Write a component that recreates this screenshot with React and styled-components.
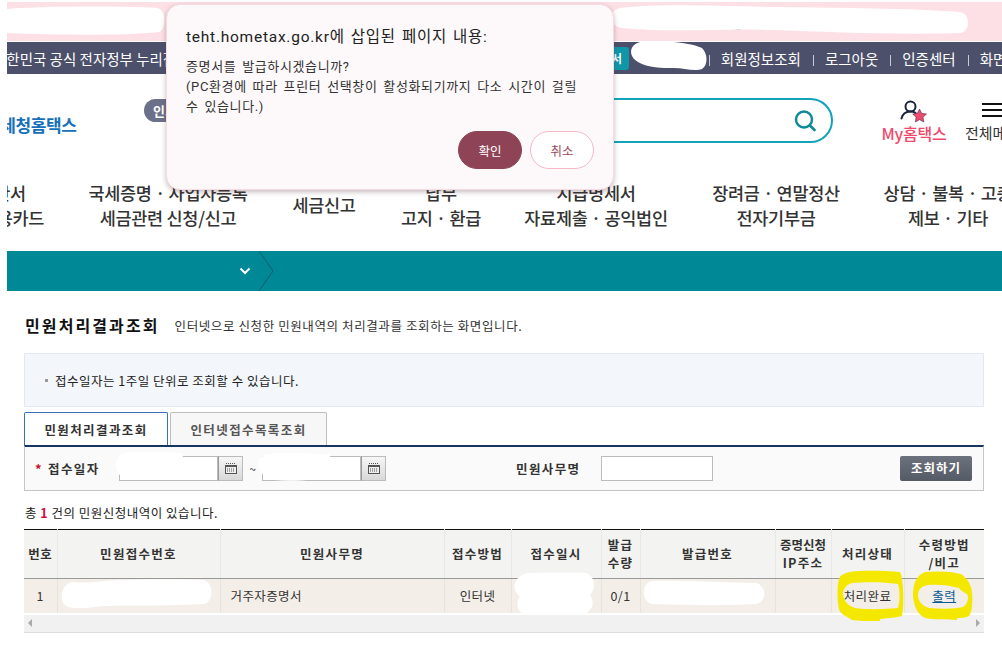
import React from "react";
import styled, { createGlobalStyle } from "styled-components";

const KR = `"Noto Sans CJK KR", "Liberation Sans", sans-serif`;

const GlobalStyle = createGlobalStyle`
  html, body { margin: 0; padding: 0; background: #fff; }
  body { font-family: ${KR}; color: #222; }
  * { box-sizing: border-box; }
`;

const Page = styled.div`
  position: relative;
  width: 1002px;
  height: 649px;
  overflow: hidden;
  background: #fff;
`;
const Site = styled.div`
  margin-left: 7px;
  padding-top: 2px;
  width: 995px;
  overflow: hidden;
`;
const PinkBar = styled.div`
  height: 39px;
  margin-bottom: 1px;
  background: #fde0e6;
`;
const GovBar = styled.div`
  height: 32px;
  background: #4c506b;
  color: #fff;
  display: flex;
  align-items: center;
  font-size: 14.5px;
  white-space: nowrap;
`;
const GovText = styled.span`
  margin-left: -14px;
  width: 175px;
  overflow: hidden;
`;
const GovLinks = styled.div`
  margin-left: auto;
  display: flex;
  align-items: center;
  margin-right: -31px;
`;
const CertBadge = styled.span`
  width: 30px;
  height: 23px;
  margin-right: 68px;
  background: #0f97a8;
  border-radius: 3px;
  font-size: 11px;
  font-weight: 700;
  text-align: right;
  line-height: 23px;
  padding-right: 7px;
`;
const GovLink = styled.span`
  &::before {
    content: "";
    display: inline-block;
    width: 1px;
    height: 11px;
    margin: 0 11px 0 12px;
    background: #c8cad6;
    vertical-align: -1px;
  }
`;

const Masthead = styled.div`
  height: 103px;
  display: flex;
  align-items: flex-start;
`;
const Logo = styled.div`
  width: 159px;
  margin: 38px 0 0 -22px;
  flex: none;
  color: #1670b7;
  font-size: 17px;
  font-weight: 700;
  letter-spacing: -0.4px;
  white-space: nowrap;
`;
const Pill = styled.div`
  width: 50px;
  height: 23px;
  margin-top: 25px;
  flex: none;
  padding-left: 9px;
  border-radius: 12px;
  background: #6c7088;
  color: #fff;
  font-size: 13px;
  font-weight: 700;
  line-height: 23px;
`;
const SearchBox = styled.div`
  width: 633px;
  height: 45px;
  margin: 24px 0 0 6px;
  flex: none;
  display: flex;
  align-items: center;
  justify-content: flex-end;
  padding-right: 15px;
  border: 2px solid #12a3b8;
  border-radius: 23px;
`;
const MyMenu = styled.div`
  width: 80px;
  margin: 26px 0 0 41px;
  flex: none;
  display: flex;
  flex-direction: column;
  align-items: center;
  color: #ee4a6c;
  font-size: 16px;
  font-weight: 500;
  white-space: nowrap;
  letter-spacing: -0.2px;
  line-height: 17px;
`;
const AllMenu = styled.div`
  margin: 29px 0 0 11px;
  width: 60px;
  flex: none;
  font-size: 15px;
  line-height: 20px;
  color: #333;
  white-space: nowrap;
`;
const Burger = styled.div`
  width: 20px;
  height: 14px;
  margin: 0 0 6px 17px;
  border-top: 2px solid #111;
  border-bottom: 2px solid #111;
  &::after {
    content: "";
    display: block;
    height: 2px;
    margin-top: 4px;
    background: #111;
  }
`;

const MainNav = styled.nav`
  height: 74px;
  display: grid;
  grid-template-columns: 203px 204px 108px 126px 184px 176px 168px;
  margin-left: -144px;
  width: 1169px;
  align-items: start;
  padding-top: 3px;
`;
const NavItem = styled.div`
  text-align: center;
  font-size: 17.5px;
  font-weight: 500;
  line-height: 25px;
  color: #333;
  white-space: nowrap;
  letter-spacing: -0.3px;
  padding-top: ${(p) => (p.$single ? "12px" : "0")};
`;

const TealBar = styled.div`
  height: 40px;
  background: #008896;
  display: flex;
  align-items: center;
  padding-left: 232px;
  gap: 8px;
`;

const Content = styled.main`
  padding: 21px 18px 0 17px;
`;
const TitleRow = styled.div`
  display: flex;
  align-items: center;
  height: 26px;
  margin-bottom: 15px;
  padding-left: 1px;
`;
const Title = styled.h1`
  margin: 0 15px 0 0;
  font-size: 16px;
  font-weight: 700;
  color: #111;
  letter-spacing: 2.1px;
`;
const TitleDesc = styled.p`
  margin: 0;
  font-size: 12.5px;
  color: #333;
  letter-spacing: 0.6px;
`;
const Notice = styled.div`
  height: 54px;
  padding-left: 20px;
  display: flex;
  align-items: center;
  gap: 7px;
  background: #f3f6fb;
  border: 1px solid #e3e8f0;
  font-size: 12.5px;
  color: #222;
  letter-spacing: 0.5px;
`;
const Bullet = styled.i`
  width: 3px;
  height: 3px;
  background: #999;
`;
const Tabs = styled.div`
  display: flex;
  gap: 2px;
  height: 33px;
  margin-top: 5px;
`;
const Tab = styled.div`
  width: ${(p) => (p.$active ? "144px" : "157px")};
  display: flex;
  align-items: center;
  justify-content: center;
  border: 1px solid ${(p) => (p.$active ? "#3a70b4" : "#bdbdbd")};
  border-bottom: 0;
  border-radius: 2px 2px 0 0;
  background: ${(p) => (p.$active ? "#fff" : "#f7f7f7")};
  color: ${(p) => (p.$active ? "#333" : "#555")};
  font-size: 12.5px;
  font-weight: 700;
  letter-spacing: 1.4px;
`;
const SearchPanel = styled.div`
  height: 46px;
  display: flex;
  align-items: center;
  padding: 0 11px 0 10px;
  background: #fafafa;
  border: 1px solid #c6c6c6;
  border-top: 2px solid #17365f;
`;
const Star = styled.span`
  width: 13px;
  color: #c8102e;
  font-size: 13px;
  font-weight: 700;
`;
const FieldLabel = styled.label`
  width: ${(p) => p.$width}px;
  margin-left: ${(p) => p.$left || 0}px;
  flex: none;
  font-size: 12.5px;
  font-weight: 700;
  color: #333;
  letter-spacing: 1.4px;
`;
const Field = styled.div`
  width: ${(p) => p.$width}px;
  height: 25px;
  flex: none;
  background: #fff;
  border: 1px solid #bbb;
`;
const CalButton = styled.div`
  width: 25px;
  height: 25px;
  flex: none;
  display: flex;
  align-items: center;
  justify-content: center;
  background: linear-gradient(#f6f6f6, #d8d8d8);
  border: 1px solid #bbb;
  border-left-color: #999;
`;
const Tilde = styled.span`
  width: 19px;
  text-align: center;
  font-size: 12px;
  color: #333;
`;
const SearchButton = styled.div`
  margin-left: auto;
  width: 72px;
  height: 25px;
  border-radius: 2px;
  background: linear-gradient(#6b717d, #545a66);
  color: #fff;
  font-size: 12.5px;
  font-weight: 700;
  line-height: 24px;
  text-align: center;
  letter-spacing: 1px;
`;
const Count = styled.p`
  margin: 13px 0 8px 1px;
  height: 17px;
  font-size: 12.5px;
  line-height: 17px;
  color: #222;
  letter-spacing: 0.5px;
`;
const CountNum = styled.b`
  color: #d0103a;
`;
const ResultTable = styled.table`
  width: 960px;
  table-layout: fixed;
  border-collapse: collapse;
  border-top: 1px solid #111;
`;
const Head = styled.th`
  height: 49px;
  padding: 0;
  background: #f3f3f1;
  border-left: 1px solid #e8e8e6;
  border-bottom: 1px solid #999;
  font-size: 12.5px;
  font-weight: 700;
  line-height: 18px;
  color: #333;
  letter-spacing: 1.3px;
  white-space: nowrap;
  &:first-child { border-left: 0; letter-spacing: 0.5px; }
`;
const NarrowText = styled.span`
  letter-spacing: 0;
`;
const Cell = styled.td`
  height: 34px;
  padding: ${(p) => (p.$left ? "0 0 0 10px" : "0")};
  background: #f3eee8;
  border-left: 1px solid #e6e3de;
  text-align: ${(p) => (p.$left ? "left" : "center")};
  font-size: 12.5px;
  letter-spacing: 0.4px;
  color: #333;
  white-space: nowrap;
  &:first-child { border-left: 0; }
`;
const PrintLink = styled.a`
  color: #0b5a94;
  text-decoration: underline;
`;
const ScrollTrack = styled.div`
  width: 960px;
  height: 18px;
  margin-top: 2px;
  padding: 0 4px;
  display: flex;
  align-items: center;
  justify-content: space-between;
  background: #f1f1f1;
  border-bottom: 1px solid #ddd;
`;
const ScrollArrow = styled.i`
  width: 0;
  height: 0;
  border-top: 4px solid transparent;
  border-bottom: 4px solid transparent;
  border-left: ${(p) => (p.$right ? "4px solid #aaa" : "0")};
  border-right: ${(p) => (p.$right ? "0" : "4px solid #aaa")};
`;

/* browser confirm dialog lying over the page */
const Dialog = styled.div`
  position: absolute;
  left: 166px;
  top: 4px;
  width: 448px;
  height: 186px;
  padding: 22px 19px 0;
  display: flex;
  flex-direction: column;
  background: #fdf9fa;
  border: 1px solid #f7dbe1;
  border-radius: 14px;
  box-shadow: 0 2px 5px rgba(90, 60, 70, 0.35);
`;
const DialogTitle = styled.div`
  font-family: Roboto, ${KR};
  font-size: 15.5px;
  line-height: 20px;
  color: #222;
  letter-spacing: 0.75px;
  word-spacing: 1.5px;
  white-space: nowrap;
`;
const DialogBody = styled.div`
  margin-top: 10px;
  font-family: Roboto, ${KR};
  font-size: 13px;
  line-height: 20px;
  color: #333;
  letter-spacing: 0.62px;
  word-spacing: 2px;
  white-space: nowrap;
`;
const DialogActions = styled.div`
  margin-top: auto;
  padding: 0 0 20px;
  display: flex;
  justify-content: flex-end;
  gap: 8px;
`;
const DialogButton = styled.button`
  width: 64px;
  height: 38px;
  padding: 0;
  border-radius: 19px;
  border: 1px solid ${(p) => (p.$primary ? "#8e4456" : "#f6b9c8")};
  background: ${(p) => (p.$primary ? "#8e4456" : "#fff")};
  color: ${(p) => (p.$primary ? "#fff" : "#9c4a5e")};
  font-family: ${KR};
  font-size: 12.5px;
`;

/* hand-drawn marks made on the screenshot: white redactions and yellow circles */
const Scribbles = styled.svg`
  position: absolute;
  left: 0;
  top: 0;
  pointer-events: none;
`;

const PersonStar = () => (
  <svg width="28" height="25" viewBox="0 0 28 25" fill="none">
    <circle cx="10.5" cy="6.500" r="5" stroke="#1c2340" strokeWidth="2" />
    <path d="M1.500 18.500c1-4.500 4.500-7 9-7 2 0 3.500.4 5 1.300" stroke="#1c2340" strokeWidth="2" strokeLinecap="round" />
    <path d="M19.500 9l2.200 4.300 4.800.7-3.500 3.300.9 4.700-4.400-2.300-4.200 2.300.8-4.700-3.400-3.300 4.700-.7z" fill="#ee4a6c" stroke="#1c2340" strokeWidth="0.5" />
  </svg>
);

const SearchIcon = () => (
  <svg width="22" height="22" viewBox="0 0 22 22" fill="none">
    <circle cx="10" cy="9.500" r="8" stroke="#0d8a97" strokeWidth="2.4" />
    <path d="M16 15.500l4.500 4.500" stroke="#0d8a97" strokeWidth="2.600" strokeLinecap="round" />
  </svg>
);

const CalendarIcon = () => (
  <svg width="12" height="11" viewBox="0 0 12 11" fill="none">
    <path d="M1 .5h10" stroke="#555" strokeDasharray="1 1" />
    <rect x="0.500" y="2.500" width="11" height="8" fill="#eee" stroke="#555" />
    <path d="M0.500 3.500h11" stroke="#555" />
    <path d="M2 6h8M2 8h8" stroke="#555" strokeDasharray="1 1" />
  </svg>
);

const columns = [33, 163, 224, 67, 90, 39, 135, 56, 73, 80];

const App = () => {
  return (
    <Page>
      <GlobalStyle />
      <Site>
        <PinkBar />
        <GovBar>
          <GovText>대한민국 공식 전자정부 누리집</GovText>
          <GovLinks>
            <CertBadge>서</CertBadge>
            <GovLink>회원정보조회</GovLink>
            <GovLink>로그아웃</GovLink>
            <GovLink>인증센터</GovLink>
            <GovLink>화면크기</GovLink>
          </GovLinks>
        </GovBar>
        <Masthead>
          <Logo>국세청홈택스</Logo>
          <Pill>인기</Pill>
          <SearchBox>
            <SearchIcon />
          </SearchBox>
          <MyMenu>
            <PersonStar />
            My홈택스
          </MyMenu>
          <AllMenu>
            <Burger />
            전체메뉴
          </AllMenu>
        </Masthead>
        <MainNav>
          <NavItem>
            전자(세금)계산서
            <br />
            현금영수증 · 신용카드
          </NavItem>
          <NavItem>
            국세증명 · 사업자등록
            <br />
            세금관련 신청/신고
          </NavItem>
          <NavItem $single>세금신고</NavItem>
          <NavItem>
            납부
            <br />
            고지 · 환급
          </NavItem>
          <NavItem>
            지급명세서
            <br />
            자료제출 · 공익법인
          </NavItem>
          <NavItem>
            장려금 · 연말정산
            <br />
            전자기부금
          </NavItem>
          <NavItem>
            상담 · 불복 · 고충
            <br />
            제보 · 기타
          </NavItem>
        </MainNav>
        <TealBar>
          <svg width="12" height="8" viewBox="0 0 12 8" fill="none">
            <path d="M1.500 1.500L6 6l4.500-4.500" stroke="#fff" strokeWidth="2" />
          </svg>
          <svg width="14" height="40" viewBox="0 0 14 40" fill="none">
            <path d="M0 0l14 20L0 40" stroke="#0b5d68" strokeWidth="1" />
          </svg>
        </TealBar>
        <Content>
          <TitleRow>
            <Title>민원처리결과조회</Title>
            <TitleDesc>인터넷으로 신청한 민원내역의 처리결과를 조회하는 화면입니다.</TitleDesc>
          </TitleRow>
          <Notice>
            <Bullet />
            접수일자는 1주일 단위로 조회할 수 있습니다.
          </Notice>
          <Tabs>
            <Tab $active>민원처리결과조회</Tab>
            <Tab>인터넷접수목록조회</Tab>
          </Tabs>
          <SearchPanel>
            <Star>*</Star>
            <FieldLabel $width={71}>접수일자</FieldLabel>
            <Field $width={99} />
            <CalButton>
              <CalendarIcon />
            </CalButton>
            <Tilde>~</Tilde>
            <Field $width={99} />
            <CalButton>
              <CalendarIcon />
            </CalButton>
            <FieldLabel $width={85} $left={130}>
              민원사무명
            </FieldLabel>
            <Field $width={112} />
            <SearchButton>조회하기</SearchButton>
          </SearchPanel>
          <Count>
            총 <CountNum>1</CountNum> 건의 민원신청내역이 있습니다.
          </Count>
          <ResultTable>
            <colgroup>
              {columns.map((w, i) => (
                <col key={i} style={{ width: w }} />
              ))}
            </colgroup>
            <thead>
              <tr>
                <Head>번호</Head>
                <Head>민원접수번호</Head>
                <Head>민원사무명</Head>
                <Head>접수방법</Head>
                <Head>접수일시</Head>
                <Head>
                  발급
                  <br />
                  수량
                </Head>
                <Head>발급번호</Head>
                <Head>
                  <NarrowText>증명신청</NarrowText>
                  <br />
                  IP주소
                </Head>
                <Head>처리상태</Head>
                <Head>
                  수령방법
                  <br />
                  /비고
                </Head>
              </tr>
            </thead>
            <tbody>
              <tr>
                <Cell>1</Cell>
                <Cell />
                <Cell $left>거주자증명서</Cell>
                <Cell>인터넷</Cell>
                <Cell />
                <Cell>0/1</Cell>
                <Cell />
                <Cell />
                <Cell>처리완료</Cell>
                <Cell>
                  <PrintLink>출력</PrintLink>
                </Cell>
              </tr>
            </tbody>
          </ResultTable>
          <ScrollTrack>
            <ScrollArrow />
            <ScrollArrow $right />
          </ScrollTrack>
        </Content>
      </Site>

      <Scribbles width="1002" height="649" viewBox="0 0 1002 649">
        <ellipse cx="738" cy="27" rx="5" ry="2.500" fill="#1d5f9a" />
        <g fill="#fff">
          <path d="M7 9c40-3 110-3 150-1 10 1 9 22 2 24-40 4-100 3-152 1z" />
          <path d="M620 8c40-5 100-2 160-1 60 1 130 1 180 5 11 2 10 19 1 21-60 2-130-1-190-3-50-2-100 3-150-2-12-3-14-17-1-20z" />
          <path d="M640 42c20-2 50 0 62 6 6 6 6 17 0 21-8 3-18-1-28-1-12 0-26 0-36-6-10-6-9-17 2-20z" />
          <path d="M122 453c18-2 40-1 60 0 2 8 1 18 0 26-22 2-48 1-60-2-8-6-8-19 0-24z" />
          <path d="M266 454c20-2 40 0 64 0l0 21c-14 5-36 7-56 5-16-3-21-20-8-26z" />
          <path d="M72 582c20 2 30-2 50-2 30-1 60-1 82 0 10 3 10 22 0 24-30 2-70 1-100 2-14 2-28 3-36 1-10-4-8-22 4-25z" />
          <path d="M528 573c18 0 40-1 58 0 10 4 10 16 4 22 4 6 4 14-4 18-20 2-46 3-62 1-8-3-8-13-4-18-8-4-9-19 8-23z" />
          <path d="M652 581c36-1 70 2 104 2 11 3 11 19 0 21-34 2-70 1-104 0-11-3-11-21 0-23z" />
        </g>
        <g fill="#f5e800" fillRule="evenodd">
          <path d="M850 572c14-2 36-1 50 0 4 8 4 36 2 44-8 2-16 2-22 3l0 2c-12 0-22 0-28-1-6-4-12-6-13-11-2-8-2-24 0-30 1-4 6-6 11-7z M852 583c-4 1-8 4-9 10 0 6 3 12 12 15 14 2 30 1 43 0 2-8 2-18 0-24-14-2-32-2-46-1z" />
          <path d="M925 572c12-1 26-1 36 2 6 4 10 10 11 18 1 10 0 20-3 24-4 2-8 2-12 2l0 2c-10-1-24 0-32-2-8-4-11-12-12-22 0-10 2-20 12-24z M928 585c-6 1-10 4-10 10 0 6 4 11 11 13 12 1 26 1 34-1 5-3 6-10 4-13-3-2-6-3-8-6-10-3-22-4-31-3z" />
        </g>
      </Scribbles>

      <Dialog>
        <DialogTitle>teht.hometax.go.kr에 삽입된 페이지 내용:</DialogTitle>
        <DialogBody>
          증명서를 발급하시겠습니까?
          <br />
          (PC환경에 따라 프린터 선택창이 활성화되기까지 다소 시간이 걸릴
          <br />수 있습니다.)
        </DialogBody>
        <DialogActions>
          <DialogButton $primary>확인</DialogButton>
          <DialogButton>취소</DialogButton>
        </DialogActions>
      </Dialog>
    </Page>
  );
};

export default App;
